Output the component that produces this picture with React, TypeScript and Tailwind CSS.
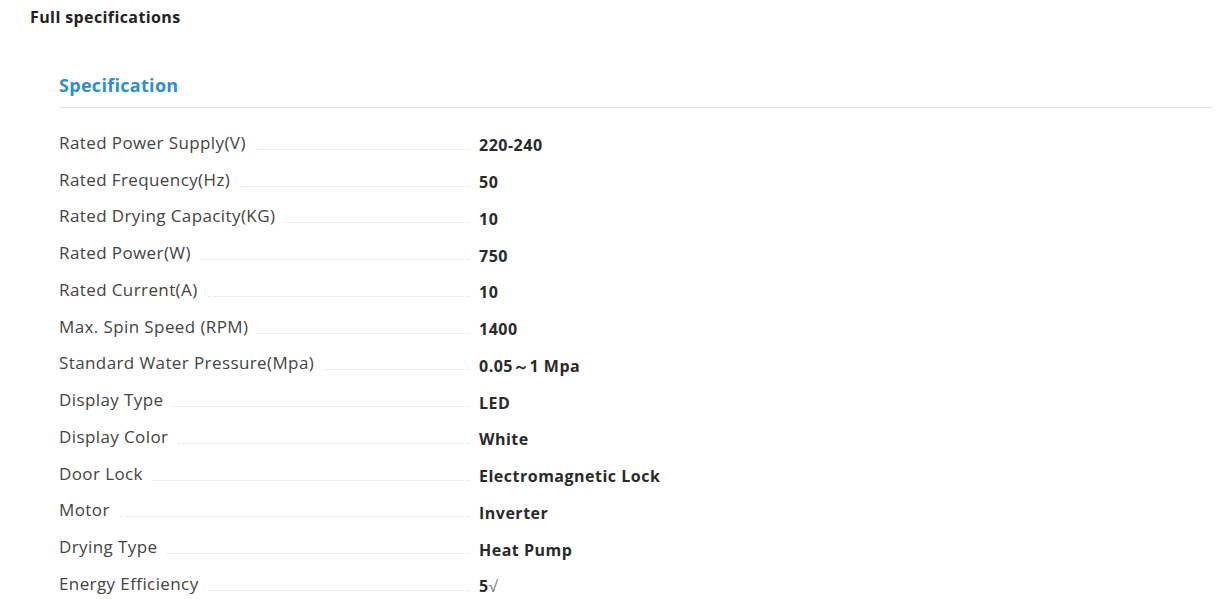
import React from "react";

const rows: [string, React.ReactNode][] = [
  ["Rated Power Supply(V)", "220-240"],
  ["Rated Frequency(Hz)", "50"],
  ["Rated Drying Capacity(KG)", "10"],
  ["Rated Power(W)", "750"],
  ["Rated Current(A)", "10"],
  ["Max. Spin Speed (RPM)", "1400"],
  ["Standard Water Pressure(Mpa)", "0.05～1 Mpa"],
  ["Display Type", "LED"],
  ["Display Color", "White"],
  ["Door Lock", "Electromagnetic Lock"],
  ["Motor", "Inverter"],
  ["Drying Type", "Heat Pump"],
  ["Energy Efficiency", <>5<span className="font-normal text-[#777]">√</span></>],
];

export default function App() {
  return (
    <div className="bg-white w-[1222px] h-[599px] overflow-hidden text-[#333]" style={{ fontFamily: '"Open Sans", "Liberation Sans", sans-serif' }}>
      <div className="pl-[30px] pt-[7px] text-[16px] tracking-[0.4px] font-bold text-[#222] leading-[20px]">Full specifications</div>
      <div className="pl-[59px] pr-[9px] pt-[47px]">
        <div className="text-[18px] tracking-[0.3px] font-bold text-[#2b8fd3] leading-[23px] pb-[10px] border-b border-[#e6e6e6]">Specification</div>
        <div className="pt-[19px]">
          {rows.map(([k, v]) => (
            <div key={k} className="flex items-center h-[36.75px]">
              <div className="flex w-[411px] items-end -mt-[6px]">
                <span className="text-[17px] tracking-[0.4px] leading-[21px] text-[#444] whitespace-nowrap">{k}</span>
                <span className="flex-1 ml-[10px] mb-[3px] border-b border-dotted border-[#e2e2e2]"></span>
              </div>
              <div className="ml-[9px] text-[16px] tracking-[0.5px] font-bold leading-[20px] text-[#2a2a2a]">{v}</div>
            </div>
          ))}
        </div>
      </div>
    </div>
  );
}
